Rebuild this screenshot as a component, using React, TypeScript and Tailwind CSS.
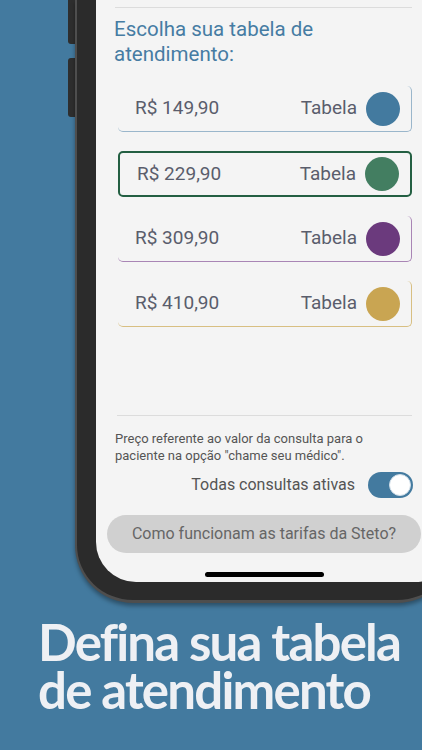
const tables = [
  { price: "R$ 149,90", dot: "bg-[#437a9f]", card: "border-r border-b border-[#9ab6cb]" },
  { price: "R$ 229,90", dot: "bg-[#437e61]", card: "border-2 border-[#235f42]" },
  { price: "R$ 309,90", dot: "bg-[#6b3a7d]", card: "border-r border-b border-[#a985b5]" },
  { price: "R$ 410,90", dot: "bg-[#c9a552]", card: "border-r border-b border-[#d8bf82]" },
];

const TableCard = ({ price, dot, card }: { price: string; dot: string; card: string }) => {
  return (
    <div className={`h-[46px] w-[294px] ml-[4px] rounded-[5px] flex items-center justify-between pl-[17px] pr-[11px] ${card}`}>
      <span className="text-[19px] text-[#5a5d6c]">{price}</span>
      <div className="flex items-center gap-[9px]">
        <span className="text-[19px] text-[#5a5d6c]">Tabela</span>
        <div className={`w-[34px] h-[34px] rounded-full ${dot}`}></div>
      </div>
    </div>
  );
};

export default function App() {
  return (
    <div className="w-[422px] h-[750px] bg-[#437a9f] overflow-hidden flex flex-col font-['Roboto',sans-serif]">
      <div className="flex pl-[68px]">
        <div className="flex flex-col w-[7px] shrink-0">
          <div className="h-[44px] bg-[#2e2e2e] rounded-bl-[3px]"></div>
          <div className="mt-[14px] h-[59px] bg-[#2e2e2e] rounded-l-[3px]"></div>
        </div>
        <div className="w-[380px] shrink-0 bg-[#2b2b2b] border-l-2 border-b-[3px] border-[#4e4e4e] rounded-bl-[58px] rounded-br-[58px] pl-[19px] pb-[18px] shadow-[0_3px_4px_rgba(0,0,0,0.35)]">
          <div className="h-[582px] bg-[#f4f4f4] rounded-bl-[40px] rounded-br-[40px] pl-[18px] flex flex-col">
            <div className="mt-[7px] ml-[1px] h-px w-[297px] bg-[#dcdcdc]"></div>
            <h1 className="mt-[9px] text-[20.5px] leading-[25px] text-[#467ca3]">
              Escolha sua tabela de
              <br />
              atendimento:
            </h1>
            <div className="mt-[19px] flex flex-col gap-[19px]">
              {tables.map((t) => (
                <TableCard key={t.price} {...t} />
              ))}
            </div>
            <div className="mt-[88px] ml-[3px] h-px w-[295px] bg-[#dcdcdc]"></div>
            <p className="mt-[14px] ml-[1px] text-[13px] leading-[17px] text-[#555]">
              Preço referente ao valor da consulta para o
              <br />
              paciente na opção "chame seu médico".
            </p>
            <div className="mt-[8px] w-[299px] flex items-center justify-end gap-[13px]">
              <span className="text-[16px] text-[#555]">Todas consultas ativas</span>
              <div className="w-[45px] h-[26px] rounded-full bg-[#437a9f] flex items-center justify-end pr-[2px]">
                <div className="w-[22px] h-[22px] rounded-full bg-white border border-[#cfdde8]"></div>
              </div>
            </div>
            <div className="mt-[17px] -ml-[7px] w-[314px] h-[38px] rounded-full bg-[#d0d0d0] flex items-center justify-center text-[16px] text-[#666]">
              Como funcionam as tarifas da Steto?
            </div>
            <div className="mt-[19px] ml-[91px] w-[119px] h-[5px] rounded-full bg-black"></div>
          </div>
        </div>
      </div>
      <div className="mt-[15px] pl-[38px] font-['Lato',sans-serif] font-bold text-[51px] leading-[48px] tracking-[-1.8px] text-[#eef0f4]">
        Defina sua tabela
        <br />
        de atendimento
      </div>
    </div>
  );
}
